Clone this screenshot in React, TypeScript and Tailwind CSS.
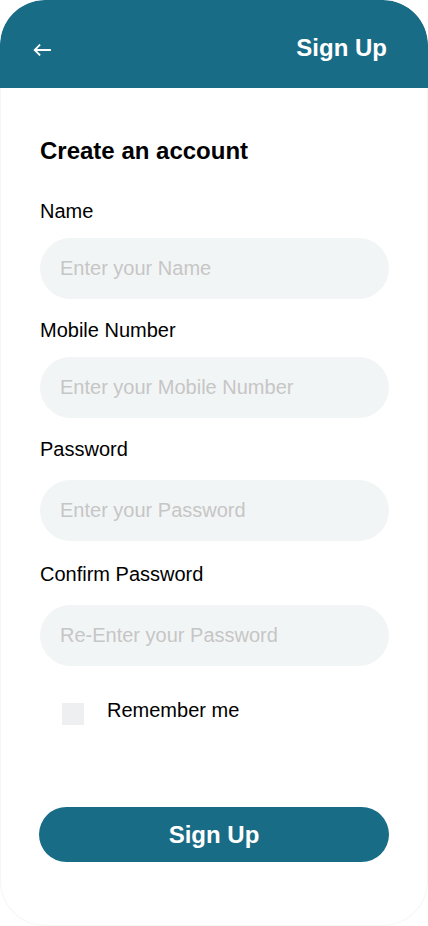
import type { ReactNode } from 'react';

const FIELDS = [
  { label: 'Name', placeholder: 'Enter your Name', labelGap: 'mt-0', inputGap: 'mt-[15px]' },
  { label: 'Mobile Number', placeholder: 'Enter your Mobile Number', labelGap: 'mt-[20px]', inputGap: 'mt-[15px]' },
  { label: 'Password', placeholder: 'Enter your Password', labelGap: 'mt-[20px]', inputGap: 'mt-[19px]' },
  { label: 'Confirm Password', placeholder: 'Re-Enter your Password', labelGap: 'mt-[22px]', inputGap: 'mt-[19px]' },
];

interface FieldProps {
  label: string;
  placeholder: string;
  labelGap: string;
  inputGap: string;
}

function Field({ label, placeholder, labelGap, inputGap }: FieldProps) {
  return (
    <div className={`flex flex-col ${labelGap}`}>
      <label className="text-[20px] leading-[23px] text-black">{label}</label>
      <input
        className={`${inputGap} h-[61px] w-full rounded-full bg-[#f2f5f5] px-5 text-[20px] text-black outline-none placeholder:text-[#c6c6c6]`}
        placeholder={placeholder}
      />
    </div>
  );
}

function Header({ children }: { children: ReactNode }) {
  return (
    <div className="flex h-[88px] items-center justify-between rounded-t-[45px] bg-[#196c86] pt-2 pl-[33px] pr-[41px]">
      <svg width="18" height="12" viewBox="0 0 18 12" fill="none" className="mt-[3px]">
        <path d="M17 6H2M6.5 1.2 1.7 6l4.8 4.8" stroke="white" strokeWidth="1.8" strokeLinecap="square" />
      </svg>
      {children}
    </div>
  );
}

export default function App() {
  return (
    <div className="h-[926px] w-[428px] bg-white font-['Liberation_Sans',Arial,sans-serif]">
      <div className="flex h-full flex-col overflow-hidden rounded-[45px] shadow-[inset_0_0_0_1px_#f6f6f6]">
        <Header>
          <span className="text-[24px] font-bold leading-[28px] text-white">Sign Up</span>
        </Header>

        <div className="flex flex-col px-[39px]">
          <h1 className="mt-[49px] pl-px text-[24px] font-bold leading-[28px] text-black">Create an account</h1>

          <div className="mt-[35px] flex flex-col pl-px">
            {FIELDS.map((f) => (
              <Field key={f.label} {...f} />
            ))}
          </div>

          <label className="mt-[33px] flex items-start pl-[23px]">
            <span className="mt-[4px] h-[22px] w-[22px] bg-[#eeeff0]" />
            <span className="ml-[23px] text-[20px] leading-[23px] text-black">Remember me</span>
          </label>

          <button className="mt-[82px] h-[55px] w-full rounded-full bg-[#196c86] text-[24px] font-bold text-white">
            Sign Up
          </button>
        </div>
      </div>
    </div>
  );
}
